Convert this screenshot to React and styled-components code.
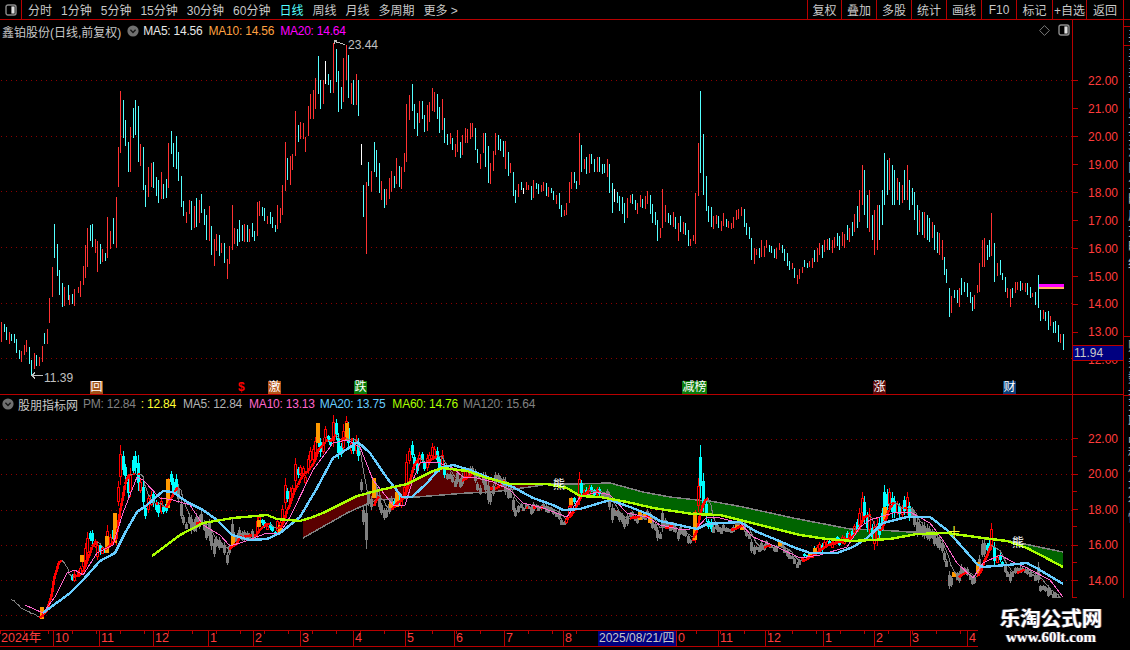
import React from 'react'
import styled, { createGlobalStyle } from 'styled-components'

const FONT = '"Liberation Sans", "Noto Sans CJK SC", sans-serif'
const LINE_RED = '#b80000'
const TEXT_RED = '#ff3c3c'

// x:top-bottom + colour, read off the daily chart, in page pixels
const BAR_DATA = `
1:322-342r 4:324-332c 6:327-340c 9:332-344r 11:334-341c 14:334-343c 16:339-353c 19:350-359c 21:351-362r 24:345-355r
26:340-352r 29:347-364c 31:360-375c 34:353-369r 36:355-366c 39:357-366r 42:346-362r 44:333-344c 47:329-344r 49:298-323r
52:267-297r 54:224-258c 57:244-276c 59:270-295c 62:283-307c 64:287-306r 68:285-300c 69:295-305r 72:294-304c 74:289-306r
78:287-293r 80:281-297r 83:266-285r 85:245-278r 87:228-267r 90:225-241c 92:224-247c 95:239-253r 97:241-272r 100:244-264c
102:249-262r 105:253-261c 107:217-258r 110:231-249r 113:218-244c 116:197-248r 118:147-187r 120:91-153r 123:100-138c 125:120-146c
128:142-172c 130:127-172r 133:108-138c 135:100-135c 138:106-162c 140:144-166r 143:147-190c 145:185-207c 148:167-197r 151:163-187r
153:162-188c 156:177-196c 158:180-203c 161:172-199r 163:184-199c 166:179-198c 168:143-188r 171:131-154c 173:143-167c 176:136-169c
178:152-181c 181:176-207c 183:201-216c 186:212-223r 189:200-214r 191:201-230c 194:206-228r 196:198-227c 199:200-223r 201:194-213c
204:209-225c 206:215-240c 209:206-241r 211:226-255c 214:239-266r 216:234-251r 219:235-256c 221:243-253r 224:243-263c 227:259-279r
229:246-264r 232:205-250r 234:228-244r 237:229-246c 239:220-242c 242:225-241c 244:224-242r 247:225-242c 249:229-242r 252:223-237c
254:231-241c 257:202-236r 259:201-216r 262:207-216c 264:208-221c 267:216-224r 270:212-224c 272:217-228c 275:225-232c 277:205-229r
280:208-223r 282:185-215r 285:142-191r 287:158-180c 290:156-185r 292:154-170r 295:111-156r 298:125-142c 300:122-139r 303:123-139r
305:137-152r 308:106-136r 310:94-119r 313:90-119r 315:78-109r 318:56-94c 320:80-109c 323:80-104r 325:61-84w 328:74-85c 330:80-93c
333:43-93r 336:49-82c 338:71-112c 341:87-109c 343:58-102r 346:45-80r 348:55-98c 351:83-104r 353:80-105c 356:74-105r 358:80-116c
361:144-165w 363:185-217c 366:182-254r 368:162-186c 371:171-192r 374:142-172c 376:150-177c 379:163-193c 381:181-200r 384:189-208c
386:189-205r 389:178-199r 391:171-192r 394:176-188c 396:158-184r 399:166-187c 401:167-189r 404:153-172r 406:104-162r 409:95-120r
412:84-111c 414:104-129c 417:113-136c 419:101-123r 422:101-119c 424:115-132c 427:105-131r 429:102-122r 432:88-111r 434:92-112r
437:94-119c 439:107-133c 442:99-130r 444:118-143c 447:134-145c 450:133-144r 452:138-150c 455:144-157r 457:130-152r 460:142-158c
462:135-155r 465:128-143r 467:129-143r 470:123-139r 472:123-137r 475:128-150c 477:149-163c 480:154-169r 483:133-153r 485:133-167c
488:146-183c 490:163-184r 493:151-171r 495:133-155r 498:135-150c 500:139-151c 503:141-157c 505:141-169r 508:152-176c 510:163-173r
513:172-196c 515:190-203c 518:184-197r 521:182-190c 523:188-194w 526:182-190r 528:185-190r 531:186-200c 533:180-198r 536:183-189c
538:184-194c 541:185-192r 543:182-191r 546:183-196c 548:187-197r 551:188-193c 553:191-200c 556:195-204r 559:193-209c 561:205-217c
564:210-216r 566:203-215r 569:182-203r 571:172-189r 574:172-183c 576:181-189c 579:133-185r 581:145-172c 584:159-169r 586:157-174c
589:154-173r 591:154-164c 594:159-172c 597:157-172r 599:157-172c 602:164-174c 604:164-173c 607:159-177r 609:164-193c 612:183-213c
614:189-202w 617:192-203c 619:196-211c 622:197-214c 624:203-223c 627:198-218r 630:195-203r 632:194-204c 635:200-210c 637:203-214r
640:195-207r 642:199-208c 645:196-209r 647:191-204r 650:195-214c 652:204-223c 655:212-225c 657:220-241c 660:228-238r 662:189-228r
665:205-222r 668:213-223c 670:215-225c 673:212-227r 675:217-229c 678:223-241r 680:216-232c 683:222-234r 685:223-235c 688:230-246c
690:239-246r 693:235-241r 695:193-244r 698:143-196r 700:91-173c 703:134-195c 706:176-211c 708:206-222c 711:207-227c 713:216-229r
716:215-224r 718:216-228c 721:221-231r 723:213-226r 726:219-227c 728:221-228r 731:223-229r 733:217-228r 736:210-220r 738:209-219r
741:207-216r 744:209-227c 746:223-235c 749:227-239c 751:238-260c 754:248-264r 756:249-255r 759:248-258c 761:240-257r 764:246-257r
766:240-248r 769:245-252c 771:246-253c 774:249-258c 776:248-259r 779:243-250r 782:245-253c 784:249-261c 787:253-266c 789:261-270c
792:263-269r 794:268-278c 797:275-284r 799:269-279r 802:267-273r 804:260-267c 807:263-268c 809:261-267r
812:258-268r 814:250-262c 817:248-262r 819:243-255r 822:245-258c 824:240-252r 827:239-250r 829:238-250c 832:240-253r 834:237-248r
837:233-246c 839:236-250c 842:232-246r 844:234-248r 847:225-240c 849:228-242r 852:222-236c 854:214-232r 857:206-228c 859:190-222r
862:165-205r 864:170-215c 867:195-228c 869:190-232r 872:215-240c 874:210-255r 877:205-250r 879:205-240c 882:190-225c 884:153-205c
887:160-195c 889:158-190r 892:165-205c 894:170-205c 897:178-200r 899:182-205c 902:185-203r 904:170-200c 907:165-200r 909:180-210c
912:188-205c 914:192-220c 917:205-235c 919:210-232r 922:212-235c 924:212-238r 927:215-240c 929:218-242c 932:222-238r 934:225-250c
937:232-253c 939:233-255r 942:240-260r 944:257-275c 946:269-283c 949:288-317c 951:296-313r 954:290-298c 957:290-303c 959:288-307r
961:278-295c 964:282-292c 967:283-297c 970:292-303c 972:297-311c 974:295-309r 977:285-293r 979:263-292r 982:240-267r 984:238-267r
987:245-260c 989:240-257c 991:213-256r 994:243-282c 997:263-276r 1000:260-275c 1002:273-280c 1005:277-292c 1007:288-298r 1010:289-307r
1012:288-298c 1015:282-293r 1017:282-290r 1020:281-291c 1022:283-290r 1025:283-292r 1027:283-295c 1030:287-298c 1032:293-297r
1035:292-305c 1038:275-308c 1040:310-321c 1043:310-319r 1045:312-321c 1048:311-330c 1050:316-326r 1053:322-333c 1055:321-333c
1058:325-342c 1060:334-343r 1063:334-350c
`

const BARS = BAR_DATA.trim().split(/\s+/).map(item => {
  const m = item.match(/(\d+):(\d+)-(\d+)(\w)/)
  return { x: +m[1], top: +m[2], bottom: +m[3], kind: m[4] }
})

const MA10_LINE = [[25,605],[43,613],[55,597],[67,573],[75,570],[83,575],[97,553],[113,545],[123,513],[137,477],[143,480],[160,498],[173,500],[190,505],[203,525],[220,535],[230,546],[243,542],[267,533],[280,533],[290,517],[313,470],[333,443],[347,440],[360,447],[373,480],[393,505],[405,505],[413,480],[420,463],[437,462],[453,468],[463,477],[477,478],[493,482],[510,490],[523,503],[543,508],[567,517],[580,497],[597,492],[610,495],[627,513],[647,517],[660,525],[683,530],[697,528],[707,517],[720,518],[740,523],[753,537],[777,547],[800,558],[820,555],[847,547],[860,527],[870,520],[893,513],[910,512],[930,523],[943,540],[957,563],[973,578],[983,563],[1000,555],[1013,562],[1027,568],[1050,580],[1063,597]]
const MA20_LINE = [[43,613],[70,593],[83,580],[100,561],[115,553],[125,533],[137,512],[147,505],[163,491],[173,492],[187,502],[203,510],[217,520],[232,535],[250,540],[267,539],[280,533],[300,517],[317,488],[333,458],[358,442],[370,453],[387,478],[402,497],[412,497],[427,483],[440,468],[453,465],[470,470],[490,478],[513,487],[533,498],[553,505],[563,510],[580,509],[610,500],[630,507],[650,515],[660,521],[683,526],[697,529],[707,524],[740,522],[757,532],[777,540],[793,547],[810,553],[837,553],[853,547],[867,538],[883,523],[907,517],[930,517],[947,530],[963,548],[978,565],[983,567],[1007,565],[1027,563],[1040,570],[1063,584]]
const MA60_LINE = [[152,556],[180,535],[203,523],[233,518],[267,515],[277,519],[300,521],[310,518],[323,513],[357,496],[380,490],[407,484],[433,471],[443,468],[467,471],[487,478],[510,484],[547,484],[567,488],[580,496],[600,497],[627,502],[653,508],[693,514],[720,515],[760,525],[800,535],[827,539],[853,541],[890,539],[917,534],[947,533],[983,538],[1007,541],[1027,548],[1050,560],[1063,567]]
const MA120_LINE = [[303,538],[347,513],[360,507],[377,500],[417,497],[467,493],[493,492],[537,486],[547,484],[577,484],[610,483],[643,492],[670,497],[697,500],[710,501],[743,507],[793,518],[850,529],[880,530],[910,532],[947,533],[983,538],[1010,541],[1063,552]]

const ORANGE_BODIES = [[42,607,619],[82,555,562],[107,536,553],[115,513,543],[168,479,508],[233,536,545],[259,520,527],[280,525,532],[318,423,443],[347,423,440],[374,478,498],[391,502,509],[397,492,507],[571,498,505],[640,512,520],[645,513,517],[650,517,523],[695,512,540],[737,525,528],[742,525,530],[780,542,547],[810,553,556],[815,548,552],[885,507,520],[954,572,577],[978,562,573]]

const GREY_RANGES = [[178,256],[360,392],[447,463],[470,565],[600,692],[712,800],[912,985],[1003,1066]]

const toLower = y => 439 + (y - 81) * 0.636
const isGrey = x => GREY_RANGES.some(([from, to]) => x >= from && x <= to)
const toPoints = line => line.map(p => p.join(',')).join(' ')

const valueAt = (line, x) => {
  for (let i = 1; i < line.length; i++) {
    if (x <= line[i][0]) {
      const [x0, y0] = line[i - 1]
      const [x1, y1] = line[i]
      return y0 + (y1 - y0) * (x - x0) / (x1 - x0)
    }
  }
  return line[line.length - 1][1]
}

const bandColumns = () => {
  const cols = []
  for (let x = 303; x <= 1063; x += 2) {
    cols.push({ x, ma60: valueAt(MA60_LINE, x), ma120: valueAt(MA120_LINE, x) })
  }
  return cols
}

const ma5Line = () => {
  const pts = []
  for (let i = 4; i < BARS.length; i++) {
    const avg = BARS.slice(i - 4, i + 1).reduce((sum, b) => sum + (b.top + b.bottom) / 2, 0) / 5
    pts.push([BARS[i].x, toLower(avg)])
  }
  return pts
}

const GlobalStyle = createGlobalStyle`
  html, body {
    margin: 0;
    padding: 0;
    background: #000;
  }
`

const Screen = styled.div`
  position: relative;
  display: flex;
  flex-direction: column;
  width: 1130px;
  height: 650px;
  overflow: hidden;
  background: #000;
  font-family: ${FONT};
  font-size: 12px;
  color: #c8c8c8;
`

const Toolbar = styled.div`
  display: flex;
  align-items: stretch;
  height: 19px;
  border-bottom: 1px solid ${LINE_RED};
`

const ToggleCell = styled.div`
  display: flex;
  align-items: center;
  justify-content: center;
  width: 21px;
  border-right: 1px solid ${LINE_RED};
`

const Tabs = styled.div`
  display: flex;
  align-items: center;
  gap: 9px;
  padding-left: 6px;
`

const Tab = styled.span`
  color: ${p => (p.$active ? '#54ffff' : '#c8c8c8')};
  white-space: nowrap;
`

const ToolButtons = styled.div`
  display: flex;
  margin-left: auto;
  margin-right: 6px;
  border-right: 1px solid ${LINE_RED};
`

const ToolButton = styled.div`
  display: flex;
  align-items: center;
  justify-content: center;
  box-sizing: border-box;
  width: ${p => p.$w}px;
  border-left: 1px solid ${LINE_RED};
  color: #c8c8c8;
  white-space: nowrap;
`

const Workspace = styled.div`
  display: flex;
  height: 610px;
`

const Charts = styled.div`
  display: flex;
  flex-direction: column;
  width: 1123px;
`

const PaneRow = styled.div`
  display: flex;
  height: ${p => p.$h}px;
  border-bottom: ${p => (p.$line ? `1px solid ${LINE_RED}` : 'none')};
`

const Pane = styled.div`
  position: relative;
  width: 1072px;
  overflow: hidden;
`

const ChartSvg = styled.svg`
  display: block;
  width: 1072px;
  height: 100%;
  shape-rendering: crispEdges;
`

const PaneHeader = styled.div`
  position: absolute;
  top: ${p => p.$top}px;
  left: ${p => p.$left}px;
  display: flex;
  align-items: center;
  height: 18px;
  white-space: nowrap;
`

const Title = styled.span`
  margin-left: ${p => p.$lead || 0}px;
  margin-right: ${p => p.$gap}px;
  color: #c8c8c8;
`

const Legend = styled.span`
  margin-left: ${p => p.$gap || 0}px;
  color: ${p => p.$color};
  letter-spacing: -0.22px;
`

const PaneIcons = styled.div`
  position: absolute;
  top: 4px;
  right: 2px;
  display: flex;
  align-items: center;
  gap: 8px;
`

const PriceNote = styled.span`
  position: absolute;
  top: ${p => p.$y}px;
  left: ${p => p.$x}px;
  color: #c0c0c0;
  font-size: 12px;
  line-height: 14px;
`

const Tag = styled.span`
  position: absolute;
  top: ${p => p.$y}px;
  left: ${p => p.$x}px;
  height: 13px;
  padding: 0 ${p => (p.$bg ? 0.5 : 0)}px;
  background: ${p => p.$bg || 'transparent'};
  color: ${p => p.$color || '#fff'};
  font-size: 12px;
  font-weight: ${p => (p.$bold ? 700 : 400)};
  line-height: 13px;
`

const Axis = styled.div`
  position: relative;
  display: flex;
  flex-direction: column;
  width: 50px;
  padding-top: ${p => p.$pad}px;
  border-left: 1px solid ${LINE_RED};
  color: ${TEXT_RED};
  overflow: hidden;
`

const AxisRow = styled.div`
  position: relative;
  display: flex;
  align-items: center;
  flex: 0 0 ${p => p.$h}px;
  height: ${p => p.$h}px;
  ${p => p.$minor && `
    &::after {
      content: '';
      position: absolute;
      left: 0;
      bottom: 0;
      width: 4px;
      height: 1px;
      background: ${LINE_RED};
    }
  `}
`

const AxisTick = styled.i`
  width: 5px;
  height: 1px;
  margin-right: 10px;
  background: ${LINE_RED};
`

const PriceBox = styled.div`
  position: absolute;
  top: 325px;
  left: 0;
  right: 0;
  height: 16px;
  padding-left: 1px;
  background: #000080;
  border-top: 1px solid ${LINE_RED};
  border-bottom: 1px solid ${LINE_RED};
  color: #c8c8c8;
  font-size: 12px;
  line-height: 15px;
  box-sizing: border-box;
`

const TimeAxis = styled.div`
  display: flex;
  height: 15px;
  border-top: 1px solid ${LINE_RED};
  border-bottom: 1px solid ${LINE_RED};
  background-image: repeating-linear-gradient(to right, ${LINE_RED} 0 1px, transparent 1px 24px);
  background-size: 100% 3px;
  background-repeat: no-repeat;
  color: ${TEXT_RED};
`

const TimeCell = styled.div`
  width: ${p => p.$w}px;
  padding-left: 1px;
  border-left: ${p => (p.$first ? 'none' : `1px solid ${LINE_RED}`)};
  box-sizing: border-box;
  font-size: 12.5px;
  line-height: 15px;
  white-space: nowrap;
`

const DateCell = styled.div`
  width: 78px;
  padding-left: 1px;
  box-sizing: border-box;
  background: #000080;
  color: #c8c8c8;
  font-size: 12px;
  line-height: 15px;
  white-space: nowrap;
`

const BottomStrip = styled.div`
  display: flex;
  height: 3px;
  overflow: hidden;
`

const BottomCell = styled.div`
  width: ${p => p.$w}px;
  padding-left: 8px;
  border-right: 1px solid ${LINE_RED};
  box-sizing: border-box;
  color: ${p => p.$color || '#c8c8c8'};
  line-height: 14px;
  white-space: nowrap;
`

const SideStrip = styled.div`
  display: flex;
  flex-direction: column;
  width: 7px;
  padding-top: 6px;
  border-left: 1px solid ${LINE_RED};
  box-sizing: border-box;
  overflow: hidden;
`

const SideTab = styled.div`
  width: 16px;
  height: ${p => p.$h}px;
  padding-top: 2px;
  border-top: 1px solid ${LINE_RED};
  box-sizing: border-box;
  writing-mode: vertical-rl;
  font-size: 13px;
  line-height: 14px;
  letter-spacing: 3px;
  color: #b4b4b4;
  white-space: nowrap;
`

const Watermark = styled.div`
  position: absolute;
  right: 0;
  bottom: 0;
  display: flex;
  flex-direction: column;
  align-items: center;
  gap: 2px;
  width: 152px;
  height: 52px;
  padding-top: 8px;
  padding-right: 6px;
  box-sizing: border-box;
  background: #000;
`

const WatermarkName = styled.div`
  font-family: "Noto Sans CJK SC", serif;
  font-size: 20.5px;
  font-weight: 700;
  line-height: 22px;
  color: #fff;
  text-shadow: 1px 0 0 #446, -1px 0 0 #654;
`

const WatermarkUrl = styled.div`
  font-family: "Liberation Serif", serif;
  font-size: 15px;
  font-weight: 700;
  line-height: 15px;
  color: #fff;
  text-shadow: 1px 0 0 #335, -1px 0 0 #654;
`

const ToggleIcon = () => (
  <svg width="12" height="12" viewBox="0 0 12 12">
    <rect x="1" y="1" width="10" height="10" rx="2" fill="#000" stroke="#8c8c8c" strokeWidth="1.4" />
    <rect x="6.4" y="2.4" width="3.2" height="7.2" fill="#e0e0e0" />
  </svg>
)

const CollapseIcon = () => (
  <svg width="12" height="12" viewBox="0 0 12 12" style={{ flex: 'none' }}>
    <circle cx="6" cy="6" r="5.6" fill="#707070" />
    <path d="M3.4 4.8 6 7.4 8.6 4.8" fill="none" stroke="#161616" strokeWidth="1.4" />
  </svg>
)

const DiamondIcon = () => (
  <svg width="11" height="11" viewBox="0 0 11 11">
    <path d="M5.5.6 10.4 5.5 5.5 10.4.6 5.5Z" fill="none" stroke="#7a7a7a" />
  </svg>
)

const Dotted = ({ ys }) => ys.map(y => (
  <line key={y} x1="1" x2="1072" y1={y + 0.5} y2={y + 0.5} stroke="#8c0000" strokeDasharray="1 4" />
))

const BAR_COLORS = { r: '#ff3232', c: '#54ffff', w: '#ffffff' }

const DailyChart = () => (
  <ChartSvg viewBox="0 20 1072 374">
    <Dotted ys={[80, 136, 191, 247, 303, 358]} />
    {BARS.map(b => (
      <line key={b.x} x1={b.x + 0.5} x2={b.x + 0.5} y1={b.top} y2={b.bottom} stroke={BAR_COLORS[b.kind]} />
    ))}
    <rect x="1039" y="284" width="25" height="3" fill="#ff00ff" />
    <rect x="1039" y="287" width="25" height="2" fill="#ffb060" />
    <path d="M334 44V40H337M334 40 338 43M338 42 345 45" fill="none" stroke="#c0c0c0" />
    <path d="M43 375.5H32M35 372.5 32 375.5 35 378.5" fill="none" stroke="#c0c0c0" />
  </ChartSvg>
)

const Candle = ({ bar }) => {
  const top = toLower(bar.top)
  const bottom = toLower(bar.bottom)
  const span = bottom - top
  const bodyTop = Math.round(top + span * 0.22)
  const bodyHeight = Math.max(1, Math.round(span * 0.56))
  const x = bar.x + 0.5
  if (isGrey(bar.x)) {
    return (
      <g stroke="#808080">
        <line x1={x} x2={x} y1={top} y2={bottom} />
        <rect x={bar.x - 0.5} y={bodyTop + 0.5} width="2" height={bodyHeight} fill="none" />
      </g>
    )
  }
  if (bar.kind === 'c') {
    return (
      <g>
        <line x1={x} x2={x} y1={top} y2={bottom} stroke="#00ffff" />
        <rect x={bar.x - 1} y={bodyTop} width="3" height={bodyHeight} fill="#00ffff" />
      </g>
    )
  }
  return (
    <g stroke="#ff0000">
      <line x1={x} x2={x} y1={top} y2={bodyTop} />
      <line x1={x} x2={x} y1={bodyTop + bodyHeight} y2={bottom} />
      <rect x={bar.x - 0.5} y={bodyTop + 0.5} width="2" height={bodyHeight} fill="none" />
    </g>
  )
}

const IndicatorChart = () => {
  const cols = bandColumns()
  const redBand = [
    ...cols.map(c => [c.x, Math.min(c.ma60, c.ma120)]),
    ...[...cols].reverse().map(c => [c.x, c.ma60 < c.ma120 ? c.ma120 : Math.min(c.ma60, c.ma120)]),
  ]
  const greenBand = [
    ...cols.map(c => [c.x, Math.min(c.ma60, c.ma120)]),
    ...[...cols].reverse().map(c => [c.x, c.ma60 > c.ma120 ? c.ma60 : Math.min(c.ma60, c.ma120)]),
  ]
  const ma5 = ma5Line()

  return (
    <ChartSvg viewBox="0 395 1072 235">
      <Dotted ys={[439, 474, 510, 545, 580, 615]} />
      <polygon points={toPoints(redBand)} fill="#5a0000" />
      <polygon points={toPoints(greenBand)} fill="#006400" />
      <polyline points={toPoints(MA120_LINE)} fill="none" stroke="#808080" strokeWidth="1.5" />
      {BARS.filter(b => b.x >= 72).map(b => <Candle key={b.x} bar={b} />)}
      {ORANGE_BODIES.map(([x, y1, y2]) => (
        <rect key={x} x={x - 2} y={y1} width="4" height={y2 - y1} fill="#ff9900" />
      ))}
      {ma5.slice(1).map((p, i) => {
        const prev = ma5[i]
        const rising = p[1] < prev[1]
        return (
          <line
            key={p[0]}
            x1={prev[0]} y1={prev[1]} x2={p[0]} y2={p[1]}
            stroke={rising ? '#ff0000' : '#808080'}
            strokeWidth={rising ? 2.6 : 1}
          />
        )
      })}
      <polyline points={toPoints(MA10_LINE)} fill="none" stroke="#ff66cc" />
      <polyline points={toPoints(MA20_LINE)} fill="none" stroke="#66ccff" strokeWidth="2.4" />
      <polyline points={toPoints(MA60_LINE)} fill="none" stroke="#aaff00" strokeWidth="2.4" />
    </ChartSvg>
  )
}

const UPPER_TICKS = ['22.00', '21.00', '20.00', '19.00', '18.00', '17.00', '16.00', '15.00', '14.00', '13.00', '12.00']
const LOWER_TICKS = ['22.00', '20.00', '18.00', '16.00', '14.00']
const TOOL_TABS = ['分时', '1分钟', '5分钟', '15分钟', '30分钟', '60分钟', '日线', '周线', '月线', '多周期', '更多 >']
const TOOL_BUTTONS = [['复权', 34], ['叠加', 35], ['多股', 35], ['统计', 35], ['画线', 35], ['F10', 35], ['标记', 36], ['+自选', 34], ['返回', 37]]
const TIME_CELLS = [['10', 46], ['11', 54], ['12', 55], ['1', 45], ['2', 47], ['3', 53], ['4', 52], ['5', 49], ['6', 50], ['7', 59], ['8', 35]]
const TIME_CELLS_LATER = [['0', 42], ['11', 47], ['12', 58], ['1', 51], ['2', 36], ['3', 57], ['4', 12]]

const App = () => (
  <Screen>
    <GlobalStyle />
    <Toolbar>
      <ToggleCell><ToggleIcon /></ToggleCell>
      <Tabs>
        {TOOL_TABS.map(t => <Tab key={t} $active={t === '日线'}>{t}</Tab>)}
      </Tabs>
      <ToolButtons>
        {TOOL_BUTTONS.map(([label, w]) => <ToolButton key={label} $w={w}>{label}</ToolButton>)}
      </ToolButtons>
    </Toolbar>
    <Workspace>
      <Charts>
        <PaneRow $h={375} $line>
          <Pane>
            <DailyChart />
            <PaneHeader $top={2} $left={2}>
              <Title $gap={6}>鑫铂股份(日线,前复权)</Title>
              <CollapseIcon />
              <Legend $gap={4} $color="#e8e8e8">MA5: 14.56</Legend>
              <Legend $gap={6} $color="#ffa040">MA10: 14.56</Legend>
              <Legend $gap={6} $color="#ff00ff">MA20: 14.64</Legend>
            </PaneHeader>
            <PaneIcons>
              <DiamondIcon />
              <ToggleIcon />
            </PaneIcons>
            <PriceNote $x={348} $y={18}>23.44</PriceNote>
            <PriceNote $x={44} $y={351}>11.39</PriceNote>
            <Tag $x={90} $y={361} $bg="#a0521a">回</Tag>
            <Tag $x={238} $y={361} $color="#ff0000" $bold>$</Tag>
            <Tag $x={268} $y={361} $bg="#b5561a">激</Tag>
            <Tag $x={354} $y={361} $bg="#0a7a0a">跌</Tag>
            <Tag $x={682} $y={361} $bg="#0a7a0a">减榜</Tag>
            <Tag $x={873} $y={361} $bg="#5a0a0a">涨</Tag>
            <Tag $x={1003} $y={361} $bg="#0a3f78">财</Tag>
          </Pane>
          <Axis $pad={47}>
            {UPPER_TICKS.map(v => (
              <AxisRow key={v} $h={27.95}><AxisTick />{v}</AxisRow>
            ))}
            <PriceBox>11.94</PriceBox>
          </Axis>
        </PaneRow>
        <PaneRow $h={235}>
          <Pane>
            <IndicatorChart />
            <PaneHeader $top={0} $left={2}>
              <CollapseIcon />
              <Title $lead={4} $gap={5}>股朋指标网</Title>
              <Legend $color="#808080">PM: 12.84</Legend>
              <Legend $gap={5} $color="#ffff33">: 12.84</Legend>
              <Legend $gap={7} $color="#b4b4b4">MA5: 12.84</Legend>
              <Legend $gap={7} $color="#ff66cc">MA10: 13.13</Legend>
              <Legend $gap={5} $color="#66ccff">MA20: 13.75</Legend>
              <Legend $gap={7} $color="#aaff00">MA60: 14.76</Legend>
              <Legend $gap={5} $color="#808080">MA120: 15.64</Legend>
            </PaneHeader>
            <Tag $x={553} $y={84}>熊</Tag>
            <Tag $x={1012} $y={142}>熊</Tag>
            <Tag $x={948} $y={132} $color="#ffff33">十</Tag>
          </Pane>
          <Axis $pad={26.3}>
            {LOWER_TICKS.map(v => (
              <AxisRow key={v} $h={35.4} $minor><AxisTick />{v}</AxisRow>
            ))}
          </Axis>
        </PaneRow>
        <TimeAxis>
          <TimeCell $w={53} $first>2024年</TimeCell>
          {TIME_CELLS.map(([label, w], i) => <TimeCell key={i} $w={w}>{label}</TimeCell>)}
          <DateCell>2025/08/21/四</DateCell>
          {TIME_CELLS_LATER.map(([label, w], i) => <TimeCell key={i} $w={w}>{label}</TimeCell>)}
        </TimeAxis>
        <BottomStrip>
          <BottomCell $w={43}>全部</BottomCell>
          <BottomCell $w={72}>自选</BottomCell>
          <BottomCell $w={72}>板块</BottomCell>
          <BottomCell $w={72}>指数</BottomCell>
          <BottomCell $w={72}>期货</BottomCell>
          <BottomCell $w={72}>基金</BottomCell>
          <BottomCell $w={72}>债券</BottomCell>
          <BottomCell $w={72}>港股</BottomCell>
          <BottomCell $w={72}>美股</BottomCell>
          <BottomCell $w={72}>外汇</BottomCell>
          <BottomCell $w={72}>资讯</BottomCell>
          <BottomCell $w={108} $color="#54ffff">涨幅榜</BottomCell>
        </BottomStrip>
      </Charts>
      <SideStrip>
        <SideTab $h={19}>买</SideTab>
        <SideTab $h={291}>买卖盘口资金流向分时成交明细</SideTab>
        <SideTab $h={59}>财务数据</SideTab>
        <SideTab $h={200}>关联品种板块行情</SideTab>
      </SideStrip>
    </Workspace>
    <Watermark>
      <WatermarkName>乐淘公式网</WatermarkName>
      <WatermarkUrl>www.60lt.com</WatermarkUrl>
    </Watermark>
  </Screen>
)

export default App
